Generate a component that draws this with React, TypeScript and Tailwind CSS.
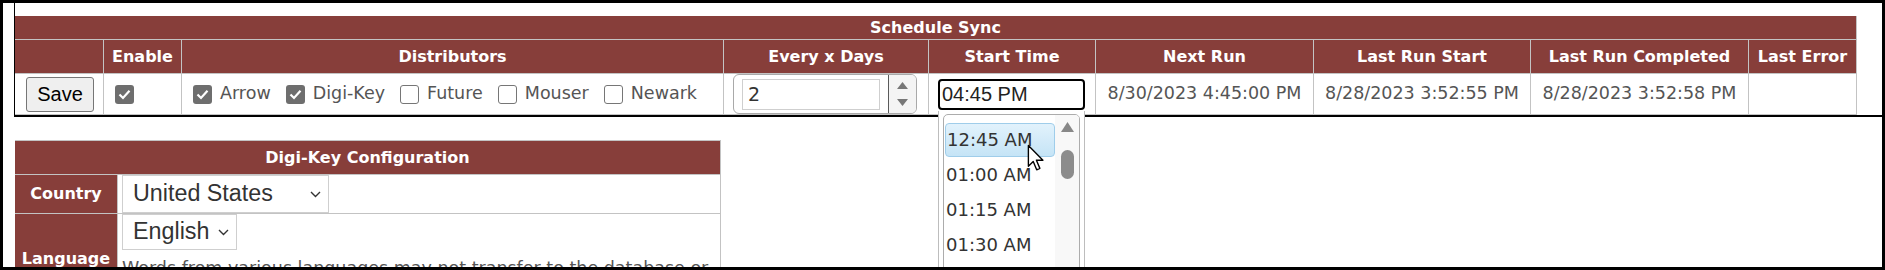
import React from 'react';

const cols = 'grid grid-cols-[88px_78px_542px_205px_167px_218px_217px_218px_108px]';

const heads = ['', 'Enable', 'Distributors', 'Every x Days', 'Start Time', 'Next Run', 'Last Run Start', 'Last Run Completed', 'Last Error'];

const distributors = [
  { name: 'Arrow', on: true },
  { name: 'Digi-Key', on: true },
  { name: 'Future', on: false },
  { name: 'Mouser', on: false },
  { name: 'Newark', on: false },
];

const times = ['12:45 AM', '01:00 AM', '01:15 AM', '01:30 AM', '01:45 AM'];

function Box({ checked }: { checked: boolean }) {
  if (checked) {
    return (
      <span className="w-[19px] h-[19px] rounded-[3px] bg-[#6e6e6e] flex items-center justify-center shrink-0">
        <svg width="13" height="11" viewBox="0 0 13 11">
          <path d="M1.5 5.5 L5 9 L11.5 1.8" fill="none" stroke="white" strokeWidth="2.2" />
        </svg>
      </span>
    );
  }
  return <span className="w-[19px] h-[19px] rounded-[3px] border-[1.5px] border-[#767676] bg-white shrink-0" />;
}

function Chevron() {
  return (
    <svg width="11" height="7" viewBox="0 0 11 7" className="shrink-0">
      <path d="M1 1 L5.5 5.5 L10 1" fill="none" stroke="#333" strokeWidth="1.4" />
    </svg>
  );
}

function SelectBox({ value, w, h }: { value: string; w: string; h: string }) {
  return (
    <div className={`${w} ${h} border border-[#cfcfcf] bg-white flex items-center justify-between pl-[10px] pr-[7px] font-['Liberation_Sans',Arial,sans-serif] text-[23.3px] leading-none text-[#333]`}>
      <span>{value}</span>
      <Chevron />
    </div>
  );
}

export default function App() {
  return (
    <div className="w-[1885px] h-[270px] overflow-hidden bg-white border-[3px] border-black relative font-['DejaVu_Sans',sans-serif]">
      {/* Schedule Sync */}
      <div className="ml-[11px] border-l border-b-2 border-black pt-[13px]">
        <div className="w-[1842px] border-r border-b border-[#c3c3c3]">
          <div className="h-[23px] bg-[#873e3a] text-white font-bold text-[16px] leading-none flex items-center justify-center">
            Schedule Sync
          </div>
          <div className={`${cols} h-[34px] bg-[#873e3a]`}>
            {heads.map((h, i) => (
              <div
                key={i}
                className={`border-t border-[#c3c3c3] ${i ? 'border-l' : ''} flex items-center justify-center text-white font-bold text-[16px] leading-none`}
              >
                {h}
              </div>
            ))}
          </div>
          <div className={`${cols} h-[41px] text-[17.5px] leading-none text-[#555]`}>
            <div className="border-t border-[#c3c3c3] flex items-center pl-[11px]">
              <button className="w-[68px] h-[35px] rounded-[3px] border border-[#767676] bg-[#efefef] text-black font-['Liberation_Sans',Arial,sans-serif] text-[20px] leading-none">
                Save
              </button>
            </div>
            <div className="border-t border-l border-[#c3c3c3] flex items-center pl-[11px]">
              <Box checked />
            </div>
            <div className="border-t border-l border-[#c3c3c3] flex items-center pl-[11px] gap-[15px]">
              {distributors.map((d) => (
                <span key={d.name} className="flex items-center gap-[8px]">
                  <Box checked={d.on} />
                  <span>{d.name}</span>
                </span>
              ))}
            </div>
            <div className="border-t border-l border-[#c3c3c3] pl-[9px]">
              <div className="w-[184px] h-[40px] rounded-[6px] border border-[#a9a9a9] bg-white flex">
                <div className="ml-[8px] mt-[4px] w-[138px] h-[31px] border border-[#cfcfcf] flex items-center pl-[5px] text-[19px] text-[#333]">
                  2
                </div>
                <div className="flex-1" />
                <div className="w-[28px] border-l border-[#5a5a5a] rounded-r-[5px] bg-[#f4f4f4] flex flex-col items-center justify-center gap-[10px]">
                  <svg width="11" height="7" viewBox="0 0 11 7"><path d="M0 7 L5.5 0 L11 7 Z" fill="#777" /></svg>
                  <svg width="11" height="7" viewBox="0 0 11 7"><path d="M0 0 L5.5 7 L11 0 Z" fill="#777" /></svg>
                </div>
              </div>
            </div>
            <div className="border-t border-l border-[#c3c3c3] flex items-center pl-[9px]">
              <div className="w-[147px] h-[31px] border-2 border-black rounded-[4px] flex items-center pl-[2px] font-['Liberation_Sans',Arial,sans-serif] text-[20px] text-[#222]">
                04:45 PM
              </div>
            </div>
            <div className="border-t border-l border-[#c3c3c3] flex items-center justify-center">8/30/2023 4:45:00 PM</div>
            <div className="border-t border-l border-[#c3c3c3] flex items-center justify-center">8/28/2023 3:52:55 PM</div>
            <div className="border-t border-l border-[#c3c3c3] flex items-center justify-center">8/28/2023 3:52:58 PM</div>
            <div className="border-t border-l border-[#c3c3c3]" />
          </div>
        </div>
      </div>

      {/* Digi-Key Configuration */}
      <div className="pl-[12px] pt-[23px]">
        <div className="w-[706px] border-t border-r border-[#c3c3c3]">
          <div className="h-[33px] bg-[#873e3a] text-white font-bold text-[16px] leading-none flex items-center justify-center">
            Digi-Key Configuration
          </div>
          <div className="grid grid-cols-[103px_1fr] h-[39px]">
            <div className="border-t border-r border-[#c3c3c3] bg-[#873e3a] text-white font-bold text-[16px] leading-none flex items-center justify-center">
              Country
            </div>
            <div className="border-t border-[#c3c3c3] pl-[4px]">
              <SelectBox value="United States" w="w-[207px]" h="h-[38px]" />
            </div>
          </div>
          <div className="grid grid-cols-[103px_1fr]">
            <div className="border-t border-r border-[#c3c3c3] bg-[#873e3a] text-white font-bold text-[16px] leading-none flex justify-center pt-[37px]">
              Language
            </div>
            <div className="border-t border-[#c3c3c3] pl-[4px] pr-[4px] pb-[10px]">
              <SelectBox value="English" w="w-[115px]" h="h-[36px]" />
              <p className="mt-[8px] text-[17.5px] leading-[21px] text-[#555]">
                Words from various languages may not transfer to the database or be searchable.
              </p>
            </div>
          </div>
        </div>
      </div>

      {/* Start Time dropdown */}
      <div className="absolute left-[935px] top-[108px] w-[147px] h-[200px] border-x border-[#bdbdbd] bg-white pl-[4px] pt-[3px]">
        <div className="w-[137px] h-[300px] rounded-[5px] border border-[#acacac] flex overflow-hidden">
          <div className="flex-1 pl-[1px] pt-[8px] text-[18px] leading-none text-[#333]">
            {times.map((t, i) =>
              i === 0 ? (
                <div key={t} className="h-[34px] rounded-[4px] border border-[#9fcdea] bg-gradient-to-b from-[#e2f2fc] to-[#c5e4f6] flex items-center pl-[1px]">
                  {t}
                </div>
              ) : (
                <div key={t} className="h-[35px] flex items-center pl-[1px]">
                  {t}
                </div>
              )
            )}
          </div>
          <div className="w-[24px] bg-[#f8f8f8] flex flex-col items-center pt-[7px]">
            <svg width="13" height="10" viewBox="0 0 13 10"><path d="M0 10 L6.5 0 L13 10 Z" fill="#888" /></svg>
            <div className="mt-[18px] w-[13px] h-[29px] rounded-full bg-[#8c8c8c]" />
          </div>
        </div>
      </div>

      {/* mouse pointer */}
      <svg className="absolute left-[1024px] top-[141px]" width="18" height="28" viewBox="0 0 13 20">
        <path d="M1 1 L1 16 L4.5 12.5 L7 18.5 L9.3 17.5 L6.8 11.6 L11.5 11.6 Z" fill="white" stroke="black" strokeWidth="1" strokeLinejoin="round" />
      </svg>
    </div>
  );
}
